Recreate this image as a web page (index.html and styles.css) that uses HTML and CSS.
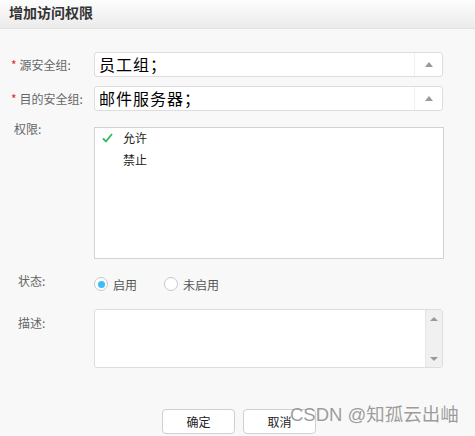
FILE: index.html
```html
<!DOCTYPE html>
<html lang="zh">
<head>
<meta charset="utf-8">
<title>增加访问权限</title>
<link rel="stylesheet" href="styles.css">
</head>
<body>
<div class="title">增加访问权限</div>
<div class="form">
  <div class="row">
    <div class="label star-label"><span class="star">*</span>源安全组:</div>
    <div class="combo"><div class="val">员工组；</div><div class="btn"><span class="tri"></span></div></div>
  </div>
  <div class="row row2">
    <div class="label star-label"><span class="star">*</span>目的安全组:</div>
    <div class="combo"><div class="val">邮件服务器；</div><div class="btn"><span class="tri"></span></div></div>
  </div>
  <div class="row row3">
    <div class="label l-perm">权限:</div>
    <div class="listbox">
      <div class="item"><span class="check"><svg width="11" height="10" viewBox="0 0 11 10"><path d="M1 5.5 L4 8.5 L10 1" fill="none" stroke="#2cbd5a" stroke-width="1.8"/></svg></span>允许</div>
      <div class="item"><span class="check"></span>禁止</div>
    </div>
  </div>
  <div class="row row4">
    <div class="label l-other">状态:</div>
    <div class="radios">
      <span class="radio on"></span><span class="rtext">启用</span>
      <span class="radio"></span><span class="rtext">未启用</span>
    </div>
  </div>
  <div class="row row5">
    <div class="label l-other l-desc">描述:</div>
    <div class="textarea">
      <div class="ta-body"></div>
      <div class="sbar"><span class="up"></span><span class="down"></span></div>
    </div>
  </div>
  <div class="buttons">
    <div class="button">确定</div>
    <div class="button">取消</div>
  </div>
</div>
<div class="watermark">CSDN @知孤云出岫</div>
</body>
</html>
```
FILE: styles.css
```css
body {
  margin: 0;
  width: 475px;
  height: 436px;
  overflow: hidden;
  position: relative;
  background: #f8f8f8;
  font-family: "Noto Sans CJK SC", "Noto Sans", sans-serif;
  font-size: 12px;
  color: #666;
}
.title {
  height: 29px;
  box-sizing: border-box;
  border-bottom: 1px solid #e2e2e2;
  background: linear-gradient(#fdfdfd, #ebebeb);
  font-weight: bold;
  font-size: 14px;
  color: #333;
  padding-left: 9px;
  line-height: 25px;
}
.form {
  padding-top: 23px;
}
.row {
  display: flex;
}
.label {
  width: 94px;
  flex: none;
  box-sizing: border-box;
  line-height: 16px;
}
.star-label {
  padding-left: 11px;
  line-height: 25px;
}
.star {
  color: #e02a2a;
  margin-right: 3px;
}
.combo {
  width: 349px;
  height: 25px;
  box-sizing: border-box;
  border: 1px solid #dddddd;
  border-radius: 3px;
  background: #fff;
  display: flex;
}
.val {
  flex: 1;
  font-size: 16px;
  color: #000;
  padding-left: 4px;
  line-height: 22px;
  letter-spacing: 1px;
}
.btn {
  width: 27px;
  border-left: 1px solid #f0f0f0;
  display: flex;
  align-items: center;
  justify-content: center;
}
.tri {
  width: 0;
  height: 0;
  border-left: 4px solid transparent;
  border-right: 4px solid transparent;
  border-bottom: 5px solid #999;
}
.row2 { margin-top: 9px; }
.row3 { margin-top: 16px; }
.l-perm {
  padding-left: 14px;
  margin-top: -6px;
}
.listbox {
  width: 350px;
  height: 132px;
  box-sizing: border-box;
  border: 1px solid #d2d2d2;
  background: #fff;
  padding-top: 0;
}
.item {
  height: 22px;
  line-height: 18px;
  display: flex;
  align-items: flex-start;
  padding-top: 1px;
  box-sizing: border-box;
  color: #222;
}
.check {
  width: 28px;
  height: 18px;
  padding-left: 7px;
  box-sizing: border-box;
  display: flex;
  align-items: center;
}
.row4 { margin-top: 14px; }
.l-other { padding-left: 18px; }
.radios {
  display: flex;
  align-items: center;
  padding-top: 4px;
  height: 14px;
}
.radio {
  width: 14px;
  height: 14px;
  box-sizing: border-box;
  border: 1px solid #c8c8c8;
  border-radius: 50%;
  background: #fff;
  display: flex;
  align-items: center;
  justify-content: center;
}
.radio.on::after {
  content: "";
  width: 7px;
  height: 7px;
  border-radius: 50%;
  background: #3cbcfb;
}
.rtext {
  margin-left: 5px;
  margin-right: 27px;
  color: #555;
}
.row5 { margin-top: 18px; }
.l-desc { padding-top: 6px; }
.textarea {
  width: 349px;
  height: 59px;
  box-sizing: border-box;
  border: 1px solid #dddddd;
  border-radius: 3px;
  background: #fff;
  display: flex;
}
.ta-body { flex: 1; }
.sbar {
  width: 16px;
  background: #f0f0f0;
  border-left: 1px solid #e6e6e6;
  display: flex;
  flex-direction: column;
  justify-content: space-between;
  align-items: center;
  padding: 7px 0 6px;
}
.up, .down {
  width: 0;
  height: 0;
  border-left: 4px solid transparent;
  border-right: 4px solid transparent;
}
.up { border-bottom: 4px solid #999; }
.down { border-top: 4px solid #999; }
.buttons {
  display: flex;
  gap: 8px;
  margin-top: 41px;
  padding-left: 162px;
}
.button {
  width: 73px;
  height: 25px;
  box-sizing: border-box;
  border: 1px solid #d0d0d0;
  border-radius: 4px;
  background: #fff;
  text-align: center;
  line-height: 23px;
  color: #222;
}
.watermark {
  position: absolute;
  left: 290px;
  top: 403px;
  font-family: "Liberation Sans", "Noto Sans CJK SC", sans-serif;
  font-size: 18.5px;
  line-height: 24px;
  color: rgba(140, 140, 140, 0.85);
  white-space: nowrap;
}
```
